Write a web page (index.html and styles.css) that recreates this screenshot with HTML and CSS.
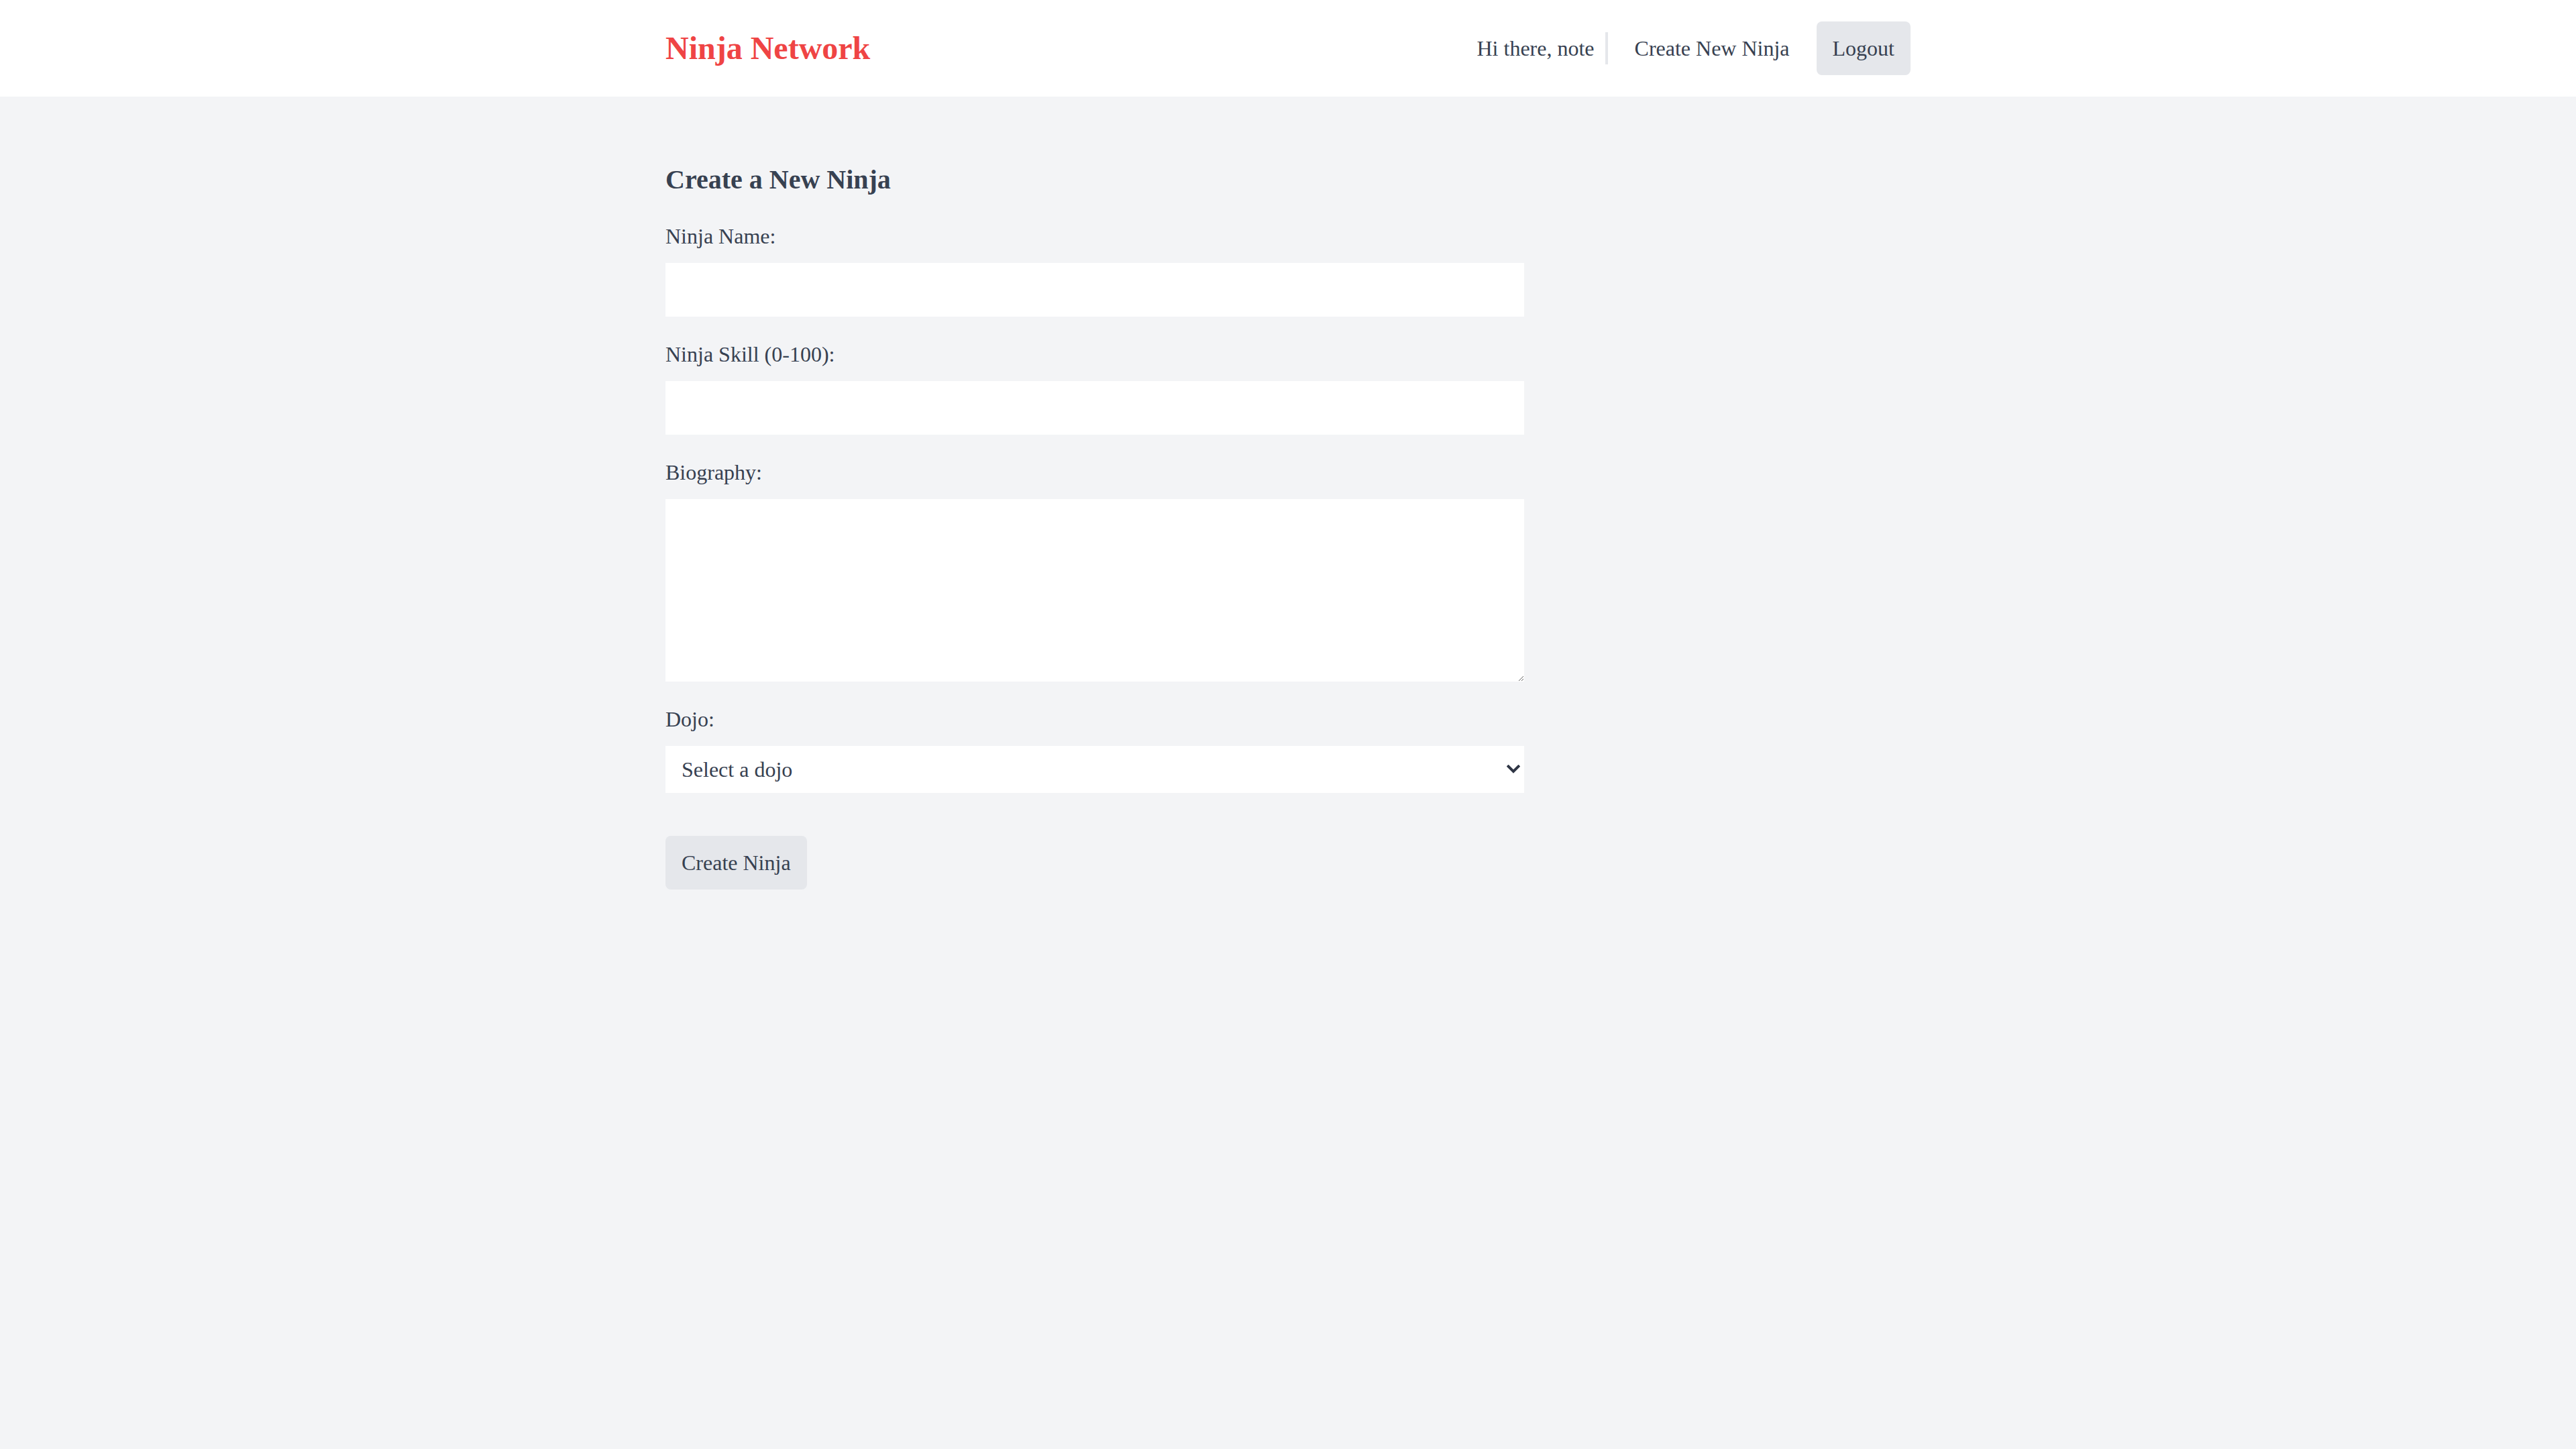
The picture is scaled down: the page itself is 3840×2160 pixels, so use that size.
FILE: index.html
```html
<!DOCTYPE html>
<html lang="en">
<head>
<meta charset="utf-8">
<title>Ninja Network</title>
<link rel="stylesheet" href="styles.css">
</head>
<body>
<header class="site-header">
  <div class="header-inner">
    <a class="logo" href="#">Ninja Network</a>
    <nav class="nav">
      <span class="greeting">Hi there, note</span>
      <a class="nav-link" href="#">Create New Ninja</a>
      <button class="btn" type="button">Logout</button>
    </nav>
  </div>
</header>
<main class="main">
  <h2 class="page-title">Create a New Ninja</h2>
  <form class="ninja-form">
    <div class="field">
      <label class="field-label" for="name">Ninja Name:</label>
      <input class="field-input" id="name" type="text">
    </div>
    <div class="field">
      <label class="field-label" for="skill">Ninja Skill (0-100):</label>
      <input class="field-input" id="skill" type="text">
    </div>
    <div class="field">
      <label class="field-label" for="bio">Biography:</label>
      <textarea class="field-input field-textarea" id="bio"></textarea>
    </div>
    <div class="field">
      <label class="field-label" for="dojo">Dojo:</label>
      <div class="select-wrap">
        <select class="field-input field-select" id="dojo">
          <option>Select a dojo</option>
        </select>
        <svg class="select-arrow" width="20" height="14" viewBox="0 0 20 14" aria-hidden="true">
          <polyline points="2.5,2.5 10,10 17.5,2.5" fill="none" stroke="#2f3645" stroke-width="4" stroke-linecap="square"/>
        </svg>
      </div>
    </div>
    <button class="btn btn-submit" type="button">Create Ninja</button>
  </form>
</main>
</body>
</html>
```

FILE: styles.css
```css
html, body {
  margin: 0;
  padding: 0;
}
body {
  background: #f3f4f6;
  color: #374151;
  font-family: "Liberation Serif", "Times New Roman", serif;
  min-height: 100vh;
}
.site-header {
  background: #ffffff;
  height: 144px;
}
.header-inner {
  width: 1856px;
  height: 100%;
  margin: 0 auto;
  display: flex;
  align-items: center;
  justify-content: space-between;
}
.logo {
  color: #ef4444;
  font-weight: bold;
  font-size: 48px;
  line-height: 64px;
  text-decoration: none;
}
.nav {
  display: flex;
  align-items: center;
  gap: 16px;
}
.greeting {
  font-size: 32px;
  line-height: 48px;
  padding-right: 16px;
  border-right: 4px solid #e5e7eb;
}
.nav-link {
  color: #374151;
  font-size: 32px;
  line-height: 48px;
  padding: 0 24px;
  text-decoration: none;
}
.btn {
  background: #e5e7eb;
  color: #374151;
  border: 0;
  border-radius: 8px;
  height: 80px;
  padding: 0 24px;
  font-family: "Liberation Serif", "Times New Roman", serif;
  font-size: 32px;
  line-height: 48px;
  cursor: pointer;
}
.main {
  width: 1856px;
  margin: 0 auto;
  padding-top: 96px;
}
.page-title {
  margin: 0 0 32px;
  font-size: 40px;
  line-height: 56px;
  font-weight: bold;
}
.ninja-form {
  width: 1280px;
}
.field {
  margin-bottom: 32px;
}
.field-label {
  display: block;
  font-size: 32px;
  line-height: 48px;
  margin-bottom: 16px;
}
.field-input {
  display: block;
  box-sizing: border-box;
  width: 100%;
  height: 80px;
  margin: 0;
  padding: 0 24px;
  border: 0;
  border-radius: 0;
  background: #ffffff;
  color: #374151;
  font-family: "Liberation Serif", "Times New Roman", serif;
  font-size: 32px;
  outline: none;
}
.field-textarea {
  height: 272px;
  padding: 16px 24px;
  resize: vertical;
}
.select-wrap {
  position: relative;
}
.field-select {
  height: 70px;
  font-size: 32px;
  line-height: 40px;
  -webkit-appearance: none;
  appearance: none;
}
.select-arrow {
  position: absolute;
  right: 6px;
  top: 28px;
  pointer-events: none;
}
.btn-submit {
  margin-top: 32px;
}
```
